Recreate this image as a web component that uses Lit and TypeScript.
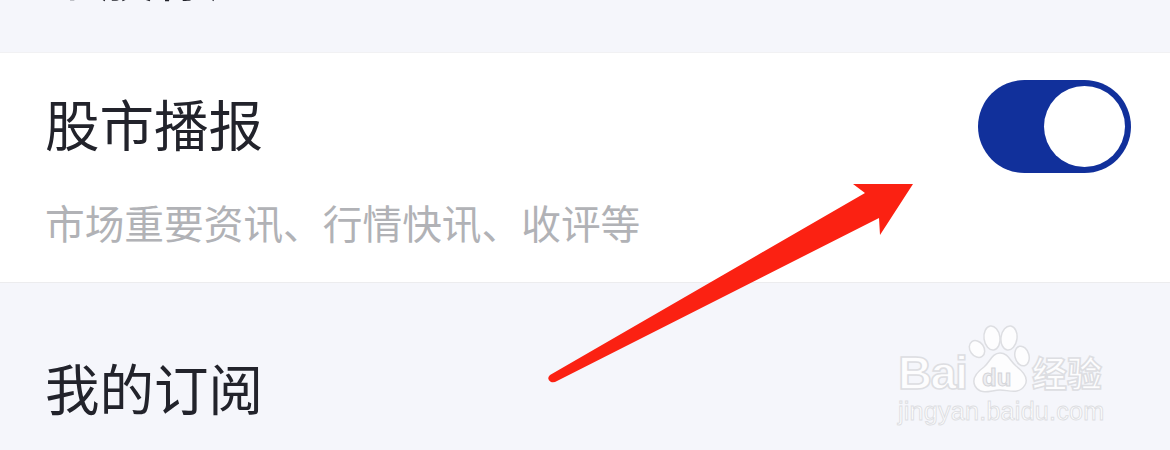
import { LitElement, html, css, svg } from "lit";
import { customElement } from "lit/decorators.js";

@customElement("app-root")
export class AppRoot extends LitElement {
  static styles = css`
    :host {
      display: block;
      position: relative;
      width: 1170px;
      height: 450px;
      overflow: hidden;
      background: #f5f6fb;
      font-family: "Noto Sans CJK SC", "Noto Sans", sans-serif;
    }
    .head {
      height: 52px;
      display: flex;
      align-items: flex-end;
      overflow: hidden;
      padding: 0 45px;
      box-sizing: border-box;
    }
    .head span {
      font-size: 54.5px;
      line-height: 54px;
      color: #22232b;
      margin-bottom: 52px;
      flex: none;
    }
    .card {
      height: 231px;
      box-sizing: border-box;
      background: #fff;
      border-top: 1px solid #f1f1f3;
      border-bottom: 1px solid #ececee;
      padding: 27px 39px 0 45px;
      display: flex;
      justify-content: space-between;
      align-items: flex-start;
    }
    .title {
      font-size: 54.5px;
      line-height: 86px;
      color: #22232b;
    }
    .sub {
      font-size: 39.7px;
      line-height: 54px;
      margin-top: 29px;
      color: #b1b2b6;
      white-space: nowrap;
    }
    .toggle {
      width: 153px;
      height: 93px;
      border-radius: 47px;
      background: #11309b;
      display: flex;
      justify-content: flex-end;
      align-items: center;
      padding-right: 6px;
      box-sizing: border-box;
      flex: none;
    }
    .knob {
      width: 81px;
      height: 81px;
      border-radius: 50%;
      background: #fff;
    }
    .section {
      padding: 57px 45px 0;
      font-size: 54.5px;
      line-height: 94px;
      color: #22232b;
    }
    .arrow {
      position: absolute;
      left: 0;
      top: 0;
      width: 1170px;
      height: 450px;
      pointer-events: none;
    }
    .mark {
      position: absolute;
      left: 897px;
      top: 323px;
      width: 210px;
      height: 104px;
    }
    .mark svg {
      position: absolute;
      left: 0;
      top: 0;
    }
    .bai,
    .jy,
    .cn,
    .du {
      position: absolute;
      white-space: nowrap;
      -webkit-text-stroke: 1.6px #dddee2;
      color: #fdfdfe;
    }
    .bai {
      left: 1px;
      top: 25px;
      font: 700 47px/50px "Liberation Sans", sans-serif;
      letter-spacing: -1.5px;
    }
    .du {
      left: 85px;
      top: 41px;
      font: 700 24px/28px "Liberation Sans", sans-serif;
      -webkit-text-stroke: 1px #d4d5d9;
      color: #eeeef1;
    }
    .cn {
      left: 135px;
      top: 28px;
      font: 700 35px/42px "Noto Sans CJK SC", sans-serif;
    }
    .jy {
      left: 1px;
      top: 74px;
      font: 400 25.2px/28px "Liberation Sans", sans-serif;
      -webkit-text-stroke: 0.9px #dddee2;
      letter-spacing: 0.2px;
    }
  `;

  private paw() {
    const fill = "#fdfdfe";
    const line = "#dddee2";
    return svg`
      <ellipse cx="95" cy="15" rx="8" ry="12" transform="rotate(-8 95 15)" fill=${fill} stroke=${line} stroke-width="1.5"/>
      <ellipse cx="112" cy="15" rx="8" ry="12" transform="rotate(8 112 15)" fill=${fill} stroke=${line} stroke-width="1.5"/>
      <ellipse cx="80" cy="26" rx="7" ry="9" transform="rotate(-35 80 26)" fill=${fill} stroke=${line} stroke-width="1.5"/>
      <ellipse cx="125" cy="33" rx="7" ry="10" transform="rotate(-15 125 33)" fill=${fill} stroke=${line} stroke-width="1.5"/>
      <path d="M103 30 C111 30 113 38 119 43 C127 49 132 55 128 62 C122 72 112 67 103 67 C94 67 84 73 78 63 C74 55 80 49 87 44 C93 39 95 30 103 30 Z" fill=${fill} stroke=${line} stroke-width="1.5"/>
    `;
  }

  render() {
    return html`
      <div class="head"><span>个股标题</span></div>
      <div class="card">
        <div>
          <div class="title">股市播报</div>
          <div class="sub">市场重要资讯、行情快讯、收评等</div>
        </div>
        <div class="toggle"><div class="knob"></div></div>
      </div>
      <div class="section">我的订阅</div>
      <svg class="arrow" viewBox="0 0 1170 450">
        <path
          d="M913 184 L853 184 L865 193 L550 375 Q546 379 551 382 Q554 383 557 381 L879 218 L880 235 Z"
          fill="#fb2112"
        />
      </svg>
      <div class="mark">
        <svg width="210" height="104" viewBox="0 0 210 104">${this.paw()}</svg>
        <span class="bai">Bai</span>
        <span class="du">du</span>
        <span class="cn">经验</span>
        <span class="jy">jingyan.baidu.com</span>
      </div>
    `;
  }
}
